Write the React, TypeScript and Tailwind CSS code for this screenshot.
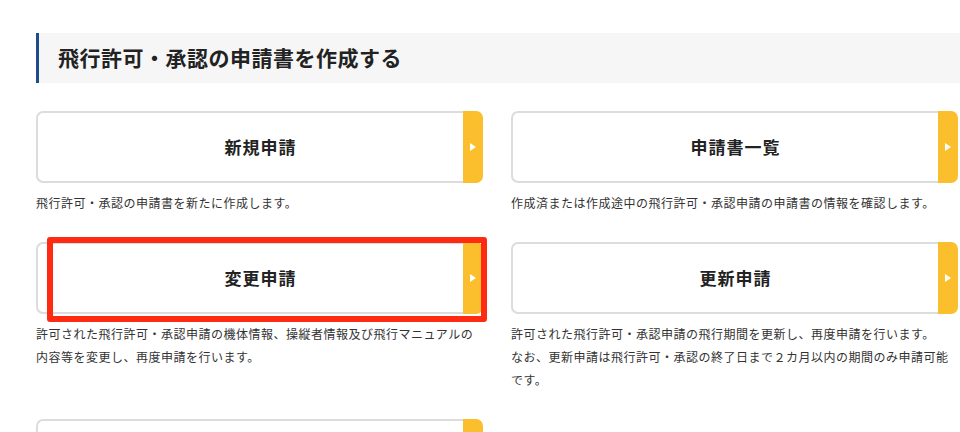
import React from "react";

type Item = {
  title: string;
  desc: React.ReactNode;
};

const items: Item[] = [
  { title: "新規申請", desc: "飛行許可・承認の申請書を新たに作成します。" },
  {
    title: "申請書一覧",
    desc: "作成済または作成途中の飛行許可・承認申請の申請書の情報を確認します。",
  },
  {
    title: "変更申請",
    desc: "許可された飛行許可・承認申請の機体情報、操縦者情報及び飛行マニュアルの内容等を変更し、再度申請を行います。",
  },
  {
    title: "更新申請",
    desc: (
      <>
        許可された飛行許可・承認申請の飛行期間を更新し、再度申請を行います。
        <br />
        なお、更新申請は飛行許可・承認の終了日まで２カ月以内の期間のみ申請可能です。
      </>
    ),
  },
  { title: "", desc: "" },
];

const MenuCard: React.FC<{ item: Item; marked?: boolean }> = ({ item, marked }) => {
  return (
    <div className="relative">
      <a href="#" className="flex h-[72px] w-full">
        <div className="flex-1 flex items-center justify-center border-2 border-r-0 border-[#dcdcdc] rounded-l-[7px] bg-white pl-[20px]">
          <span className="text-[17px] font-bold text-[#222] tracking-[1px]">{item.title}</span>
        </div>
        <div className="w-[20px] flex items-center justify-center bg-[#fbbf2d] rounded-r-[7px]">
          <svg width="6" height="8" viewBox="0 0 6 8">
            <path d="M0 0 L6 4 L0 8 Z" fill="#fff" />
          </svg>
        </div>
      </a>
      {/* annotation box */}
      {marked && (
        <div className="absolute left-[11px] top-[-5px] w-[440px] h-[85px] border-[6px] border-[#ff2a12] rounded-[3px] pointer-events-none" />
      )}
      {item.desc && (
        <p className="mt-[8px] text-[12px] leading-[23px] tracking-[0.5px] text-[#333]">{item.desc}</p>
      )}
    </div>
  );
};

const App: React.FC = () => {
  return (
    <div
      className="w-[960px] h-[432px] overflow-hidden bg-white pl-[36px] pt-[33px]"
      style={{ fontFamily: '"Noto Sans CJK JP", "Noto Sans", sans-serif' }}
    >
      <div className="h-[50px] flex items-center bg-[#f6f6f6] border-l-[3px] border-[#1f4d8a] pl-[19px]">
        <h2 className="text-[21px] font-bold text-[#222] tracking-[0.5px]">飛行許可・承認の申請書を作成する</h2>
      </div>

      <div className="mt-[28px] grid grid-cols-[447px_447px] gap-x-[28px] gap-y-[28px] items-start">
        {items.map((item, i) => (
          <MenuCard item={item} key={i} marked={i === 2} />
        ))}
      </div>
    </div>
  );
};

export default App;
